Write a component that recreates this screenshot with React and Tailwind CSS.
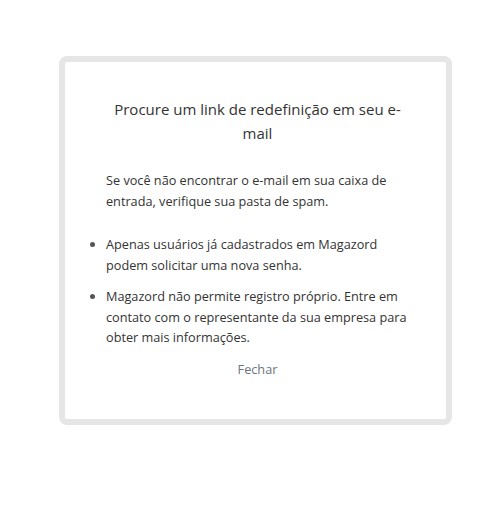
import React from 'react';

export default function App() {
  return (
    <div className="min-h-[521px] w-full bg-white pt-[56px] pl-[59px]">
      <div
        className="w-[393px] rounded-[8px] border-[6px] border-[#e6e6e6] bg-white pl-[41px] pr-[37px] pt-[35px] pb-[39px] text-[#333]"
        style={{ fontFamily: '"Open Sans", "Noto Sans", sans-serif' }}
      >
        <h2 className="text-center text-[15px] leading-[24px] text-[#333]">
          Procure um link de redefinição em seu e-mail
        </h2>
        <p className="mt-[25px] text-[12.7px] leading-[20.5px]">
          Se você não encontrar o e-mail em sua caixa de entrada, verifique sua pasta de spam.
        </p>
        <ul className="mt-[23px] list-disc text-[12.7px] leading-[20.5px] marker:text-[#555]">
          <li>Apenas usuários já cadastrados em Magazord podem solicitar uma nova senha.</li>
          <li className="mt-[11px]">
            Magazord não permite registro próprio. Entre em contato com o representante da sua empresa para obter mais informações.
          </li>
        </ul>
        <div className="mt-[8px] text-center">
          <button className="text-[12.7px] leading-[20px] text-[#6c757d]">Fechar</button>
        </div>
      </div>
    </div>
  );
}
